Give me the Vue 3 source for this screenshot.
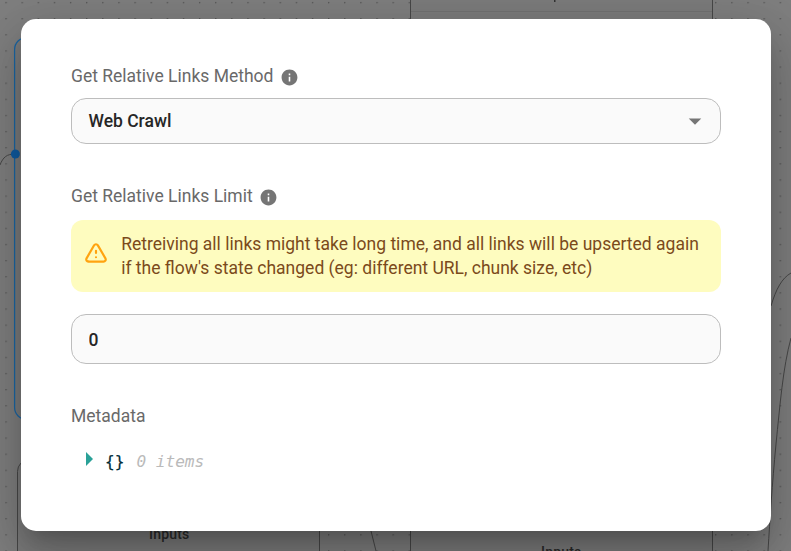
<script setup>
import { ref } from 'vue'

const method = ref('Web Crawl')
const limit = ref('0')
</script>

<template>
  <div class="screen">
    <svg class="canvas" width="791" height="551" viewBox="0 0 791 551" aria-hidden="true">
      <defs>
        <pattern id="dots" x="5.4" y="1.9" width="16.13" height="16.13" patternUnits="userSpaceOnUse">
          <circle cx="0.7" cy="0.7" r="0.7" fill="#4c4c4c" />
        </pattern>
      </defs>
      <rect width="791" height="551" fill="#7f7f7f" />
      <rect width="791" height="551" fill="url(#dots)" />
      <g fill="#7c7c7c" stroke="#484848">
        <rect class="node active" x="14.6" y="37.5" width="304" height="382" rx="12" />
        <rect x="17.5" y="459.5" width="302" height="140" rx="12" />
        <rect x="410.5" y="-40" width="302" height="640" />
      </g>
      <path d="M411 11.5H712" stroke="#717171" />
      <g fill="none" stroke="#484848">
        <path d="M0 165C3 157 7 154 15 154" />
        <path d="M791 273C782 278 776 289 771 306" />
        <path d="M791 338C783 367 780 405 776 444C772 486 770 518 768 551" />
        <path d="M371 531L376 551" />
      </g>
      <circle cx="15.4" cy="154" r="4.5" fill="#0f5ca2" />
      <rect x="554" y="0" width="1.5" height="2" fill="#333" />
    </svg>
    <span class="node-title first">Inputs</span>
    <span class="node-title second">Inputs</span>

    <main class="dialog">
      <div class="label">
        <span>Get Relative Links Method</span>
        <svg class="info" viewBox="0 0 24 24"><path d="M12 2C6.48 2 2 6.48 2 12s4.48 10 10 10 10-4.48 10-10S17.52 2 12 2zm1 15h-2v-6h2v6zm0-8h-2V7h2v2z" /></svg>
      </div>
      <div class="field select">
        <span>{{ method }}</span>
        <svg class="arrow" viewBox="0 0 24 24"><path d="M7 10l5 5 5-5z" /></svg>
      </div>

      <div class="label limit-label">
        <span>Get Relative Links Limit</span>
        <svg class="info" viewBox="0 0 24 24"><path d="M12 2C6.48 2 2 6.48 2 12s4.48 10 10 10 10-4.48 10-10S17.52 2 12 2zm1 15h-2v-6h2v6zm0-8h-2V7h2v2z" /></svg>
      </div>
      <div class="warning">
        <svg viewBox="0 0 24 24"><path d="M12 9v2m0 4v.01M5 19h14a2 2 0 0 0 1.84-2.75L13.74 4a2 2 0 0 0-3.5 0l-7.1 12.25A2 2 0 0 0 4.9 19" /></svg>
        <p>Retreiving all links might take long time, and all links will be upserted again<br>if the flow's state changed (eg: different URL, chunk size, etc)</p>
      </div>
      <input v-model="limit" class="field number" aria-label="Get Relative Links Limit">

      <div class="label meta-label">Metadata</div>
      <div class="json">
        <svg viewBox="0 0 7 14"><path d="M0 0L7 7L0 14Z" /></svg>
        <span class="braces">{}</span>
        <span class="items">0 items</span>
      </div>
    </main>
  </div>
</template>

<style>
body { overflow: hidden; }
</style>

<style scoped>
.screen {
  box-sizing: border-box;
  position: relative;
  width: 791px;
  height: 551px;
  padding: 19px 20px 20px 21px;
  overflow: hidden;
  font-family: Roboto, sans-serif;
  font-size: 17.5px;
}
.canvas { position: absolute; left: 0; top: 0; display: block; }
.active { stroke: #1a66a5; stroke-width: 1.25; }
.node-title {
  position: absolute;
  color: #2b2b2b;
  font-size: 14px;
  font-weight: 500;
  line-height: 20px;
  letter-spacing: .2px;
}
.first { left: 149px; top: 524px; }
.second { left: 541px; top: 542px; }
.dialog {
  box-sizing: border-box;
  position: relative;
  width: 750px;
  height: 512px;
  padding: 44px 50px 0;
  border-radius: 15px;
  background: #fff;
  box-shadow: 0 14px 19px -9px rgba(0,0,0,.2), 0 30px 48px 4px rgba(0,0,0,.14), 0 11px 58px 10px rgba(0,0,0,.12);
}
.label {
  display: flex;
  align-items: center;
  gap: 7px;
  height: 26px;
  color: #696969;
}
.info { width: 19px; height: 19px; margin-top: 3px; fill: #757575; }
.field {
  box-sizing: border-box;
  display: flex;
  align-items: center;
  width: 650px;
  border: 1px solid #bdbdbd;
  border-radius: 15px;
  background: #fafafa;
  color: #262626;
  font: 500 17.5px Roboto, sans-serif;
}
.select { justify-content: space-between; height: 46px; margin-top: 9px; padding: 0 10px 0 16.5px; }
.arrow { width: 30px; height: 30px; fill: #757575; }
.limit-label { margin-top: 39px; gap: 6px; }
.warning {
  display: flex;
  align-items: center;
  height: 72px;
  margin-top: 11px;
  padding-left: 12.2px;
  box-sizing: border-box;
  border-radius: 12px;
  background: #fefcbf;
  color: #7b4a1b;
}
.warning svg {
  width: 26px;
  height: 26px;
  margin: -4px 12px 0 0;
  fill: none;
  stroke: #ffa310;
  stroke-width: 2;
  stroke-linecap: round;
  stroke-linejoin: round;
}
.warning p { margin: 0; line-height: 24px; white-space: nowrap; }
.number { height: 50px; margin-top: 22px; padding: 2px 16.5px 0; outline: none; }
.meta-label { margin-top: 39px; }
.json {
  display: flex;
  align-items: center;
  height: 24px;
  margin-top: 20px;
  padding-left: 15px;
  font: 16.1px "DejaVu Sans Mono", monospace;
}
.json svg { width: 7px; height: 14px; margin: -4px 12px 0 0; fill: #2aa198; }
.braces { color: #002b36; -webkit-text-stroke: .2px #002b36; }
.items { margin-left: 12px; color: #bababa; font-style: italic; }
</style>
